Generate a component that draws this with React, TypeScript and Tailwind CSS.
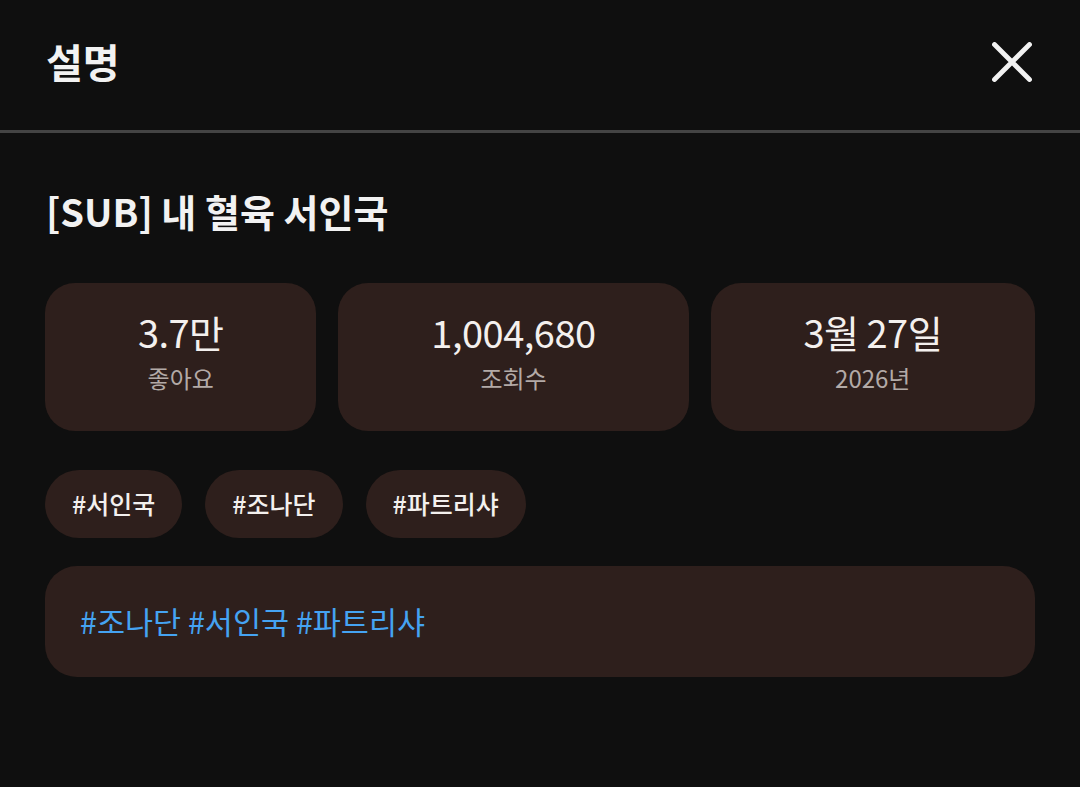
import React from "react";

const font = { fontFamily: '"Noto Sans CJK KR", "Noto Sans", sans-serif' };

function Stat({ value, label }: { value: string; label: string }) {
  return (
    <div className="grow h-[148px] flex flex-col items-center rounded-[30px] bg-[#2e1f1c] pt-[29px]">
      <div className="text-[38px] leading-[40px] text-[#f4f0ee] tracking-[-0.5px]">{value}</div>
      <div className="mt-[11px] text-[24px] leading-[30px] text-[#b3aaa7]">{label}</div>
    </div>
  );
}

function Chip({ text }: { text: string }) {
  return (
    <div className="h-[68px] px-[27px] flex items-center rounded-full bg-[#2e1f1c] text-[25px] font-medium text-[#f3f0ee]">
      {text}
    </div>
  );
}

export default function App() {
  return (
    <div className="w-[1080px] h-[787px] bg-[#0f0f0f] overflow-hidden" style={font}>
      <div className="h-[130px] flex items-center justify-between pl-[46px] pr-[48px]">
        <div className="text-[40px] font-bold text-[#f2f2f2] leading-none pb-[8px]">설명</div>
        <svg width="40" height="40" viewBox="0 0 40 40" className="mb-[6px]" fill="none">
          <path d="M2.5 2.5L37.5 37.5M37.5 2.5L2.5 37.5" stroke="#f2f2f2" strokeWidth="4.8" strokeLinecap="round" />
        </svg>
      </div>
      <div className="h-[3px] bg-[#444444]" />
      <div className="px-[45px]">
        <div className="pt-[54px] text-[38px] font-semibold text-[#f2f2f2] leading-[48px] pl-[1px]">
          [SUB] 내 혈육 서인국
        </div>
        <div className="mt-[48px] flex gap-[22px]">
          <Stat value="3.7만" label="좋아요" />
          <Stat value="1,004,680" label="조회수" />
          <Stat value="3월 27일" label="2026년" />
        </div>
        <div className="mt-[39px] flex gap-[23px]">
          <Chip text="#서인국" />
          <Chip text="#조나단" />
          <Chip text="#파트리샤" />
        </div>
        <div className="mt-[28px] h-[111px] rounded-[32px] bg-[#2e1f1c] flex items-center px-[35px]">
          <span className="text-[30.5px] text-[#45a3f2]">#조나단 #서인국 #파트리샤</span>
        </div>
      </div>
    </div>
  );
}
